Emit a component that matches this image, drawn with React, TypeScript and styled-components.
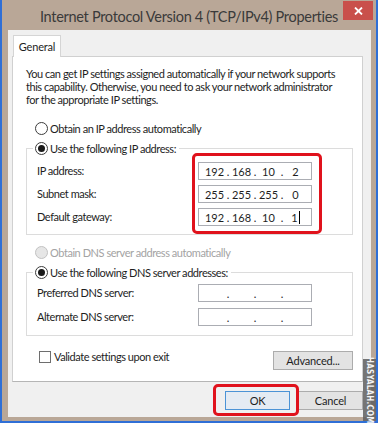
import React from "react";
import styled, { createGlobalStyle } from "styled-components";

const GlobalStyle = createGlobalStyle`
  html, body {
    margin: 0;
    padding: 0;
    background: #ffffff;
  }
  body {
    font-family: Lato, "Liberation Sans", Arial, sans-serif;
  }
  * {
    box-sizing: border-box;
  }
`;

const Window = styled.div`
  position: relative;
  width: 378px;
  height: 423px;
  display: flex;
  flex-direction: column;
  background: #b9a797;
  border: 2px solid #2f6fd6;
  border-top: none;
  font-size: 11px;
  letter-spacing: -0.45px;
  color: #1e1e1e;
`;

const TitleBar = styled.div`
  height: 30px;
  flex: none;
  display: grid;
  grid-template-columns: 1fr auto 1fr;
  padding: 0 3px;
`;

const Title = styled.div`
  grid-column: 2;
  font-size: 14.5px;
  letter-spacing: -0.3px;
  line-height: 34px;
  color: #3a3a3a;
  white-space: nowrap;
`;

const CloseButton = styled.div`
  justify-self: end;
  width: 30px;
  height: 19px;
  margin-top: 1px;
  display: flex;
  align-items: center;
  justify-content: center;
  background: #c9504b;
`;

const Client = styled.div`
  flex: 1;
  margin: 0 5px 4px 6px;
  padding: 5px 8px 0 4px;
  display: flex;
  flex-direction: column;
  background: #f0f0f0;
`;

const TabStrip = styled.div`
  display: flex;
  padding-left: 1px;
`;

const Tab = styled.div`
  position: relative;
  z-index: 1;
  width: 48px;
  height: 22px;
  margin-bottom: -1px;
  background: #ffffff;
  border: 1px solid #d5d5d5;
  border-bottom: none;
  line-height: 21px;
  text-align: center;
  letter-spacing: -0.2px;
`;

const Panel = styled.div`
  height: 326px;
  padding: 10px 9px 0 13px;
  background: #ffffff;
  border: 1px solid #d0d0d0;
  border-bottom-color: #b5b5b5;
  display: flex;
  flex-direction: column;
`;

const Intro = styled.p`
  margin: 0;
  line-height: 13px;
  white-space: nowrap;
`;

const OptionRow = styled.div<{ $top?: number }>`
  display: flex;
  align-items: center;
  gap: 2px;
  height: 13px;
  margin: ${(p) => p.$top ?? 0}px 0 0 9px;
`;

const Radio = styled.span<{ $checked?: boolean; $disabled?: boolean }>`
  flex: none;
  width: 13px;
  height: 13px;
  border-radius: 50%;
  border: 1px solid ${(p) => (p.$disabled ? "#c2c2c2" : "#3c3c3c")};
  background: ${(p) => (p.$disabled ? "#e6e6e6" : "#ffffff")};
  display: flex;
  align-items: center;
  justify-content: center;
  &::after {
    content: "";
    display: ${(p) => (p.$checked ? "block" : "none")};
    width: 7px;
    height: 7px;
    border-radius: 50%;
    background: #1a1a1a;
  }
`;

const OptionText = styled.span<{ $disabled?: boolean }>`
  line-height: 13px;
  white-space: nowrap;
  color: ${(p) => (p.$disabled ? "#a3a3a3" : "#1e1e1e")};
`;

const Group = styled.fieldset<{ $padTop: number; $padBottom: number }>`
  margin: 7px 0 0;
  min-width: 0;
  padding: ${(p) => p.$padTop}px 8px ${(p) => p.$padBottom}px 10px;
  border: 1px solid #dcdcdc;
`;

const Legend = styled.legend`
  display: flex;
  align-items: center;
  gap: 2px;
  height: 13px;
  margin-left: -4px;
  padding: 0 3px 0 2px;
`;

const FieldGrid = styled.div`
  display: grid;
  grid-template-columns: 161px 114px;
`;

const Column = styled.div<{ $gap: number }>`
  position: relative;
  display: flex;
  flex-direction: column;
  gap: ${(p) => p.$gap}px;
`;

const FieldLabel = styled.span`
  height: 18px;
  line-height: 18px;
  white-space: nowrap;
`;

const IpBox = styled.div`
  height: 18px;
  display: grid;
  grid-template-columns: 25px 2px 25px 2px 25px 2px 25px;
  align-items: center;
  padding-left: 3px;
  background: #ffffff;
  border: 1px solid #abadb3;
  letter-spacing: 0;
`;

const Octet = styled.span`
  text-align: center;
  white-space: nowrap;
`;

const Dot = styled.span`
  display: flex;
  justify-content: center;
`;

const Caret = styled.span`
  display: inline-block;
  width: 1px;
  height: 13px;
  margin-left: 1px;
  vertical-align: -2px;
  background: #000000;
`;

const Highlight = styled.div<{ $t: number; $r: number; $b: number; $l: number }>`
  position: absolute;
  top: ${(p) => p.$t}px;
  right: ${(p) => p.$r}px;
  bottom: ${(p) => p.$b}px;
  left: ${(p) => p.$l}px;
  border: 3px solid #e0121c;
  border-radius: 5px;
  pointer-events: none;
`;

const CheckRow = styled.div`
  display: flex;
  justify-content: space-between;
  align-items: flex-start;
  margin-top: 14px;
  padding-left: 13px;
`;

const CheckLabel = styled.label`
  display: flex;
  align-items: center;
  gap: 3px;
  height: 13px;
`;

const CheckBox = styled.span`
  width: 12px;
  height: 12px;
  background: #ffffff;
  border: 1px solid #6e6e6e;
`;

const Button = styled.button<{ $w: number; $primary?: boolean }>`
  width: ${(p) => p.$w}px;
  height: 19px;
  padding: 0;
  font-family: Lato, "Liberation Sans", Arial, sans-serif;
  font-size: 11px;
  letter-spacing: -0.2px;
  color: #1e1e1e;
  background: ${(p) => (p.$primary ? "#e4ebf3" : "#e3e3e3")};
  border: 1px solid ${(p) => (p.$primary ? "#4b93d6" : "#acacac")};
  border-radius: 0;
`;

const AdvancedButton = styled(Button)`
  margin-top: 1px;
`;

const ButtonRow = styled.div`
  display: flex;
  justify-content: flex-end;
  gap: 8px;
  margin-top: 9px;
`;

const Spot = styled.div`
  position: relative;
  display: flex;
`;

const Watermark = styled.div`
  position: absolute;
  right: 0;
  bottom: 0;
  width: 13px;
  height: 62px;
  display: flex;
  align-items: center;
  justify-content: center;
  writing-mode: vertical-rl;
  background: rgba(95, 95, 95, 0.85);
  color: #f4f4f4;
  font-family: "DejaVu Sans Condensed", "Liberation Sans", sans-serif;
  font-size: 8px;
  font-weight: bold;
  letter-spacing: 0.2px;
  white-space: nowrap;
`;

const IpAddress: React.FC<{ parts: string[]; caret?: boolean }> = ({ parts, caret }) => (
  <IpBox>
    {parts.map((part, i) => (
      <React.Fragment key={i}>
        {i > 0 && <Dot>.</Dot>}
        <Octet>
          {part}
          {caret && i === 3 && <Caret />}
        </Octet>
      </React.Fragment>
    ))}
  </IpBox>
);

const empty = ["", "", "", ""];

export default function App() {
  return (
    <>
      <GlobalStyle />
      <Window>
        <TitleBar>
          <Title>Internet Protocol Version 4 (TCP/IPv4) Properties</Title>
          <CloseButton>
            <svg width="9" height="8" viewBox="0 0 9 8">
              <path d="M1 0.5 L8 7.5 M8 0.5 L1 7.5" stroke="#ffffff" strokeWidth="1.8" />
            </svg>
          </CloseButton>
        </TitleBar>
        <Client>
          <TabStrip>
            <Tab>General</Tab>
          </TabStrip>
          <Panel>
            <Intro>
              You can get IP settings assigned automatically if your network supports
              <br />
              this capability. Otherwise, you need to ask your network administrator
              <br />
              for the appropriate IP settings.
            </Intro>

            <OptionRow $top={16}>
              <Radio />
              <OptionText>Obtain an IP address automatically</OptionText>
            </OptionRow>

            <Group $padTop={7} $padBottom={8}>
              <Legend>
                <Radio $checked />
                <OptionText>Use the following IP address:</OptionText>
              </Legend>
              <FieldGrid>
                <Column $gap={5}>
                  <FieldLabel>IP address:</FieldLabel>
                  <FieldLabel>Subnet mask:</FieldLabel>
                  <FieldLabel>Default gateway:</FieldLabel>
                </Column>
                <Column $gap={5}>
                  <IpAddress parts={["192", "168", "10", "2"]} />
                  <IpAddress parts={["255", "255", "255", "0"]} />
                  <IpAddress parts={["192", "168", "10", "1"]} caret />
                  <Highlight $t={-9} $r={-10} $b={-8} $l={-6} />
                </Column>
              </FieldGrid>
            </Group>

            <OptionRow $top={11}>
              <Radio $disabled />
              <OptionText $disabled>Obtain DNS server address automatically</OptionText>
            </OptionRow>

            <Group $padTop={5} $padBottom={9}>
              <Legend>
                <Radio $checked />
                <OptionText>Use the following DNS server addresses:</OptionText>
              </Legend>
              <FieldGrid>
                <Column $gap={6}>
                  <FieldLabel>Preferred DNS server:</FieldLabel>
                  <FieldLabel>Alternate DNS server:</FieldLabel>
                </Column>
                <Column $gap={6}>
                  <IpAddress parts={empty} />
                  <IpAddress parts={empty} />
                </Column>
              </FieldGrid>
            </Group>

            <CheckRow>
              <CheckLabel>
                <CheckBox />
                Validate settings upon exit
              </CheckLabel>
              <AdvancedButton $w={80}>Advanced...</AdvancedButton>
            </CheckRow>
          </Panel>

          <ButtonRow>
            <Spot>
              <Button $w={65} $primary>
                OK
              </Button>
              <Highlight $t={-7} $r={-9} $b={-6} $l={-12} />
            </Spot>
            <Button $w={65}>Cancel</Button>
          </ButtonRow>
        </Client>
        <Watermark>HASYALAH.COM</Watermark>
      </Window>
    </>
  );
}
